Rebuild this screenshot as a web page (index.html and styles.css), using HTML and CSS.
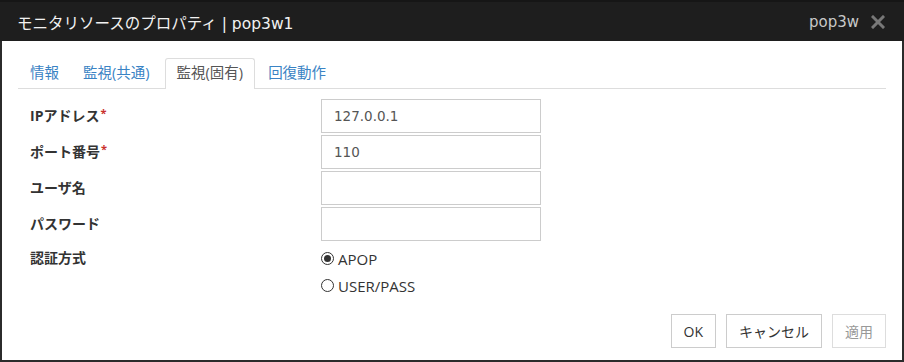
FILE: index.html
```html
<!DOCTYPE html>
<html lang="ja">
<head>
    <meta charset="UTF-8">
    <title>モニタリソースのプロパティ | pop3w1</title>
    <link rel="stylesheet" href="styles.css">
</head>
<body>
    <div class="dialog">
        <div class="dialog-header">
            <span class="dialog-title">モニタリソースのプロパティ | pop3w1</span>
            <span class="dialog-host">pop3w</span>
            <svg class="dialog-close" width="14" height="14" viewBox="0 0 14 14">
                <path d="M2 2 L12 12 M12 2 L2 12" stroke="#787878" stroke-width="3" stroke-linecap="square"/>
            </svg>
        </div>

        <div class="dialog-body">
            <!-- tabs -->
            <ul class="tabs">
                <li class="tab">情報</li>
                <li class="tab">監視(共通)</li>
                <li class="tab active">監視(固有)</li>
                <li class="tab">回復動作</li>
            </ul>

            <!-- form -->
            <div class="form">
                <label class="form-label">IPアドレス<span class="req">*</span></label>
                <div class="field"><input class="text-input" type="text" value="127.0.0.1"></div>

                <label class="form-label">ポート番号<span class="req">*</span></label>
                <div class="field"><input class="text-input" type="text" value="110"></div>

                <label class="form-label">ユーザ名</label>
                <div class="field"><input class="text-input" type="text"></div>

                <label class="form-label">パスワード</label>
                <div class="field"><input class="text-input" type="password"></div>

                <label class="form-label radio-label">認証方式</label>
                <div class="radio-group">
                    <label class="radio"><input type="radio" name="auth" checked><span>APOP</span></label>
                    <label class="radio"><input type="radio" name="auth"><span>USER/PASS</span></label>
                </div>
            </div>

            <div class="buttons">
                <button class="btn">OK</button>
                <button class="btn">キャンセル</button>
                <button class="btn" disabled>適用</button>
            </div>
        </div>
    </div>
</body>
</html>
```

FILE: styles.css
```css
body {
    margin: 0;
    background: #fff;
    font-family: "Open Sans", "Noto Sans CJK JP", sans-serif;
    color: #333;
}

.dialog {
    width: 904px;
    height: 362px;
    box-sizing: border-box;
    border: 2px solid #2b2b2b;
    border-top: 0;
    display: flex;
    flex-direction: column;
}

.dialog-header {
    height: 41px;
    background: #1e1e1e;
    border-top: 2px solid #161616;
    box-sizing: border-box;
    display: flex;
    align-items: center;
    padding: 0 19px 0 17px;
    margin: 0 -2px;
    color: #f2f2f2;
    font-family: "DejaVu Sans", "Noto Sans CJK JP", sans-serif;
}

.dialog-title {
    font-size: 15.5px;
    flex: 1;
}

.dialog-host {
    font-size: 15px;
    color: #c8c8c8;
    margin-right: 12px;
}

.dialog-close {
    display: block;
}

.dialog-body {
    flex: 1;
    padding: 17px 16px 0 16px;
    display: flex;
    flex-direction: column;
}

.tabs {
    list-style: none;
    margin: 0;
    padding: 0;
    display: flex;
    border-bottom: 1px solid #ddd;
}

.tab {
    font-size: 14.5px;
    line-height: 28px;
    padding: 0 11px;
    color: #3a83c4;
    border: 1px solid transparent;
    border-bottom: 0;
    border-radius: 3px 3px 0 0;
    margin-bottom: -1px;
    cursor: pointer;
}

.tab.active {
    color: #555;
    background: #fff;
    border-color: #ddd;
    padding: 0 11px;
    margin: 0 1px -1px 3px;
    height: 30px;
}

.form {
    display: grid;
    grid-template-columns: 291px 220px;
    row-gap: 2px;
    padding: 10px 0 0 12px;
}

.form-label {
    font-size: 14px;
    font-weight: bold;
    color: #333;
    display: flex;
    align-items: center;
    padding-bottom: 3px;
}

.req {
    color: #c9302c;
    font-size: 11px;
    align-self: flex-start;
    margin-top: 6px;
    margin-left: 1px;
}

.text-input {
    width: 100%;
    height: 34px;
    box-sizing: border-box;
    border: 1px solid #ccc;
    padding: 0 12px;
    font-family: "DejaVu Sans", "Noto Sans CJK JP", sans-serif;
    font-size: 13.5px;
    color: #555;
    outline: none;
}

.radio-label {
    align-items: flex-start;
    padding-top: 4px;
}

.radio-group {
    display: flex;
    flex-direction: column;
    padding-top: 2px;
}

.radio {
    display: flex;
    align-items: center;
    height: 27px;
    font-size: 15px;
    color: #333;
}

.radio input {
    appearance: none;
    -webkit-appearance: none;
    width: 13px;
    height: 13px;
    margin: 0 4px 0 0;
    border: 1px solid #333;
    border-radius: 50%;
    box-sizing: border-box;
    position: relative;
}

.radio input:checked::after {
    content: '';
    position: absolute;
    left: 2px;
    top: 2px;
    width: 7px;
    height: 7px;
    border-radius: 50%;
    background: #333;
}

.buttons {
    margin-top: auto;
    margin-bottom: 12px;
    display: flex;
    justify-content: flex-end;
    gap: 10px;
}

.btn {
    height: 34px;
    padding: 0 12px;
    background: #fff;
    border: 1px solid #ccc;
    font-family: "Open Sans", "Noto Sans CJK JP", sans-serif;
    font-size: 14px;
    color: #333;
}

.btn[disabled] {
    color: #999;
    border-color: #ddd;
}
```
